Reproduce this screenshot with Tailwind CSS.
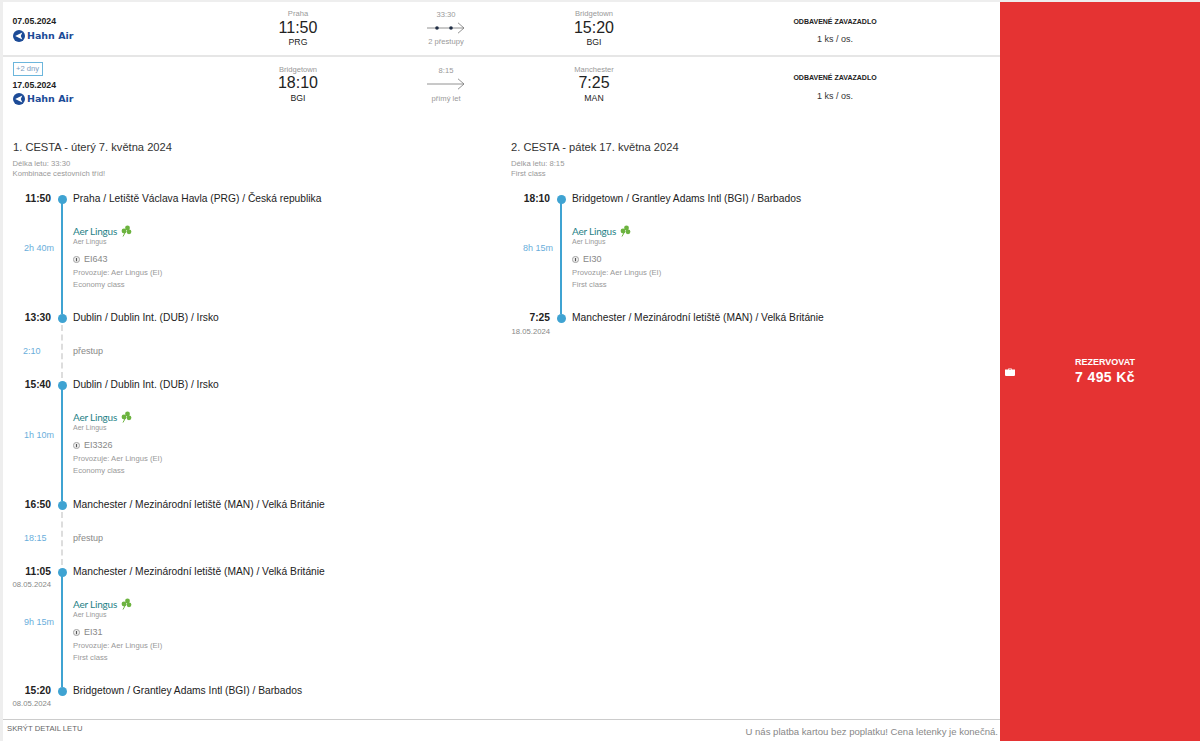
<!DOCTYPE html>
<html lang="en">
<head>
    <meta charset="UTF-8">
    <meta name="viewport" content="width=device-width, initial-scale=1.0">
    <title>Flight detail</title>
    <script src="https://cdn.jsdelivr.net/npm/@tailwindcss/browser@4"></script>
</head>
<body class="font-['Liberation_Sans',Arial,sans-serif]">
    <div class="flex h-[741px] overflow-hidden bg-[#eeeeee] pl-[3px] pt-[2px]">
        <div class="flex w-[997px] flex-col bg-white">

            <!-- summary row 1 -->
            <div class="grid h-[53px] grid-cols-[235px_120px_176px_120px_1fr]">
                <div class="pl-[9.5px] pt-[14px]">
                    <div class="text-[8.7px] leading-[10px] font-bold text-[#222]">07.05.2024</div>
                    <div class="mt-[3px] flex h-[13px] items-center gap-[2.5px]">
                        <svg width="12" height="12" viewBox="0 0 12 12"><circle cx="6" cy="6" r="6" fill="#1c4b97"/><path d="M2.2 6 9.3 2.4 7.8 6 9.3 9.6Z" fill="#fff"/></svg>
                        <span class="font-['DejaVu_Sans',sans-serif] text-[9.5px] leading-none font-bold text-[#1c4b97]">Hahn Air</span>
                    </div>
                </div>
                <div class="flex flex-col items-center pt-[7px]">
                    <div class="text-[7.6px] leading-[9px] text-[#999]">Praha</div>
                    <div class="mt-[1px] text-[16px] leading-[17px] text-[#222]">11:50</div>
                    <div class="mt-[1px] text-[8.7px] leading-[10px] text-[#222]">PRG</div>
                </div>
                <div class="flex flex-col items-center pt-[8px]">
                    <div class="text-[7.6px] leading-[9px] text-[#999]">33:30</div>
                    <svg class="mt-[3px]" width="38" height="12" viewBox="0 0 38 12" fill="none"><path d="M0 6H37M31 .8 37 6 31 11.2" stroke="#777" stroke-width=".8"/><circle cx="10" cy="6" r="1.8" fill="#1f2d44"/><circle cx="24" cy="6" r="1.8" fill="#1f2d44"/></svg>
                    <div class="mt-[3px] text-[7.6px] leading-[9px] text-[#999]">2 přestupy</div>
                </div>
                <div class="flex flex-col items-center pt-[7px]">
                    <div class="text-[7.6px] leading-[9px] text-[#999]">Bridgetown</div>
                    <div class="mt-[1px] text-[16px] leading-[17px] text-[#222]">15:20</div>
                    <div class="mt-[1px] text-[8.7px] leading-[10px] text-[#222]">BGI</div>
                </div>
                <div class="flex flex-col items-center pl-[16px] pt-[15px]">
                    <div class="text-[7px] leading-[9px] font-bold text-[#222]">ODBAVENÉ ZAVAZADLO</div>
                    <div class="mt-[8px] text-[9px] leading-[10px] text-[#333]">1 ks / os.</div>
                </div>
            </div>
            <div class="h-[2px] bg-[#e6e6e6]"></div>

            <!-- summary row 2 -->
            <div class="grid h-[63px] grid-cols-[235px_120px_176px_120px_1fr]">
                <div class="pl-[9.5px] pt-[5px]">
                    <div class="flex h-[14px] w-[30px] items-center justify-center border border-[#6cb6dc] text-[7.6px] text-[#7a9cc0]">+2 dny</div>
                    <div class="mt-[4px] text-[8.7px] leading-[10px] font-bold text-[#222]">17.05.2024</div>
                    <div class="mt-[2px] flex h-[13px] items-center gap-[2.5px]">
                        <svg width="12" height="12" viewBox="0 0 12 12"><circle cx="6" cy="6" r="6" fill="#1c4b97"/><path d="M2.2 6 9.3 2.4 7.8 6 9.3 9.6Z" fill="#fff"/></svg>
                        <span class="font-['DejaVu_Sans',sans-serif] text-[9.5px] leading-none font-bold text-[#1c4b97]">Hahn Air</span>
                    </div>
                </div>
                <div class="flex flex-col items-center pt-[8px]">
                    <div class="text-[7.6px] leading-[9px] text-[#999]">Bridgetown</div>
                    <div class="text-[16px] leading-[17px] text-[#222]">18:10</div>
                    <div class="mt-[2px] text-[8.7px] leading-[10px] text-[#222]">BGI</div>
                </div>
                <div class="flex flex-col items-center pt-[9px]">
                    <div class="text-[7.6px] leading-[9px] text-[#999]">8:15</div>
                    <svg class="mt-[3px]" width="38" height="12" viewBox="0 0 38 12" fill="none"><path d="M0 6H37M31 .8 37 6 31 11.2" stroke="#777" stroke-width=".8"/></svg>
                    <div class="mt-[4px] text-[7.6px] leading-[9px] text-[#999]">přímý let</div>
                </div>
                <div class="flex flex-col items-center pt-[8px]">
                    <div class="text-[7.6px] leading-[9px] text-[#999]">Manchester</div>
                    <div class="text-[16px] leading-[17px] text-[#222]">7:25</div>
                    <div class="mt-[2px] text-[8.7px] leading-[10px] text-[#222]">MAN</div>
                </div>
                <div class="flex flex-col items-center pl-[16px] pt-[16px]">
                    <div class="text-[7px] leading-[9px] font-bold text-[#222]">ODBAVENÉ ZAVAZADLO</div>
                    <div class="mt-[9px] text-[9px] leading-[10px] text-[#333]">1 ks / os.</div>
                </div>
            </div>

            <!-- detail -->
            <div class="flex flex-1 pt-[20px]">
                <!-- leg 1 -->
                <div class="w-[499px]">
                    <div class="pl-[10px]">
                        <div class="text-[11.15px] leading-[14px] text-[#333]">1. CESTA - úterý 7. května 2024</div>
                        <div class="ml-[-0.5px] mt-[5px] text-[7.7px] leading-[10px] text-[#999]">Délka letu: 33:30</div>
                        <div class="ml-[-0.5px] text-[7.7px] leading-[10px] text-[#999]">Kombinace cestovních tříd!</div>
                    </div>

                    <div class="mt-[13px] flex h-[14px] items-center">
                        <div class="w-[48px] text-right text-[10.25px] font-bold text-[#222]">11:50</div>
                        <div class="flex w-[22px] justify-center"><div class="h-[9px] w-[9px] rounded-full bg-[#3fa3d2]"></div></div>
                        <div class="text-[10.25px] text-[#222]">Praha / Letiště Václava Havla (PRG) / Česká republika</div>
                    </div>
                    <div class="flex h-[105px]">
                        <div class="flex w-[48px] items-center pb-[19px] pl-[21px] text-[9px] whitespace-nowrap text-[#6aaedb]">2h 40m</div>
                        <div class="flex w-[22px] justify-center pr-[1px]"><div class="my-[-3px] w-[2px] bg-[#3fa3d2]"></div></div>
                        <div class="pt-[19px]">
                            <div class="flex h-[12px] items-center gap-[3px]">
                                <span class="font-['Lato',sans-serif] text-[10px] tracking-[-0.2px] text-[#1f7f86]">Aer Lingus</span>
                                <svg width="12" height="12" viewBox="0 0 12 12" fill="#6cb33f"><circle cx="4" cy="6" r="2.4"/><circle cx="7.5" cy="3" r="2.4"/><circle cx="9" cy="6.8" r="2.4"/><path d="M6 6 3 11.5" stroke="#6cb33f"/></svg>
                            </div>
                            <div class="text-[7px] leading-[9px] text-[#999]">Aer Lingus</div>
                            <div class="mt-[8px] flex h-[11px] items-center gap-[4px] text-[9px] text-[#888]">
                                <svg width="7" height="7" viewBox="0 0 7 7" fill="none"><circle cx="3.5" cy="3.5" r="3.1" fill="#eee" stroke="#888" stroke-width=".7"/><path d="M3.5 2v3.2" stroke="#555" stroke-width="1.1"/></svg>EI643
                            </div>
                            <div class="mt-[1.5px] text-[7.7px] leading-[11px] text-[#999]">Provozuje: Aer Lingus (EI)</div>
                            <div class="mt-[1px] text-[7.7px] leading-[11px] text-[#999]">Economy class</div>
                        </div>
                    </div>
                    <div class="flex h-[14px] items-center">
                        <div class="w-[48px] text-right text-[10.25px] font-bold text-[#222]">13:30</div>
                        <div class="flex w-[22px] justify-center"><div class="h-[9px] w-[9px] rounded-full bg-[#3fa3d2]"></div></div>
                        <div class="text-[10.25px] text-[#222]">Dublin / Dublin Int. (DUB) / Irsko</div>
                    </div>
                    <div class="flex h-[53px]">
                        <div class="flex w-[48px] items-center pl-[20px] text-[9px] text-[#6aaedb]">2:10</div>
                        <div class="flex w-[22px] justify-center pr-[1px]"><div class="border-l-2 border-dashed border-[#dddddd]"></div></div>
                        <div class="flex items-center text-[9px] text-[#888]">přestup</div>
                    </div>
                    <div class="flex h-[14px] items-center">
                        <div class="w-[48px] text-right text-[10.25px] font-bold text-[#222]">15:40</div>
                        <div class="flex w-[22px] justify-center"><div class="h-[9px] w-[9px] rounded-full bg-[#3fa3d2]"></div></div>
                        <div class="text-[10.25px] text-[#222]">Dublin / Dublin Int. (DUB) / Irsko</div>
                    </div>
                    <div class="flex h-[106px]">
                        <div class="flex w-[48px] items-center pb-[19px] pl-[21px] text-[9px] whitespace-nowrap text-[#6aaedb]">1h 10m</div>
                        <div class="flex w-[22px] justify-center pr-[1px]"><div class="my-[-3px] w-[2px] bg-[#3fa3d2]"></div></div>
                        <div class="pt-[19px]">
                            <div class="flex h-[12px] items-center gap-[3px]">
                                <span class="font-['Lato',sans-serif] text-[10px] tracking-[-0.2px] text-[#1f7f86]">Aer Lingus</span>
                                <svg width="12" height="12" viewBox="0 0 12 12" fill="#6cb33f"><circle cx="4" cy="6" r="2.4"/><circle cx="7.5" cy="3" r="2.4"/><circle cx="9" cy="6.8" r="2.4"/><path d="M6 6 3 11.5" stroke="#6cb33f"/></svg>
                            </div>
                            <div class="text-[7px] leading-[9px] text-[#999]">Aer Lingus</div>
                            <div class="mt-[8px] flex h-[11px] items-center gap-[4px] text-[9px] text-[#888]">
                                <svg width="7" height="7" viewBox="0 0 7 7" fill="none"><circle cx="3.5" cy="3.5" r="3.1" fill="#eee" stroke="#888" stroke-width=".7"/><path d="M3.5 2v3.2" stroke="#555" stroke-width="1.1"/></svg>EI3326
                            </div>
                            <div class="mt-[1.5px] text-[7.7px] leading-[11px] text-[#999]">Provozuje: Aer Lingus (EI)</div>
                            <div class="mt-[1px] text-[7.7px] leading-[11px] text-[#999]">Economy class</div>
                        </div>
                    </div>
                    <div class="flex h-[14px] items-center">
                        <div class="w-[48px] text-right text-[10.25px] font-bold text-[#222]">16:50</div>
                        <div class="flex w-[22px] justify-center"><div class="h-[9px] w-[9px] rounded-full bg-[#3fa3d2]"></div></div>
                        <div class="text-[10.25px] text-[#222]">Manchester / Mezinárodní letiště (MAN) / Velká Británie</div>
                    </div>
                    <div class="flex h-[53px]">
                        <div class="flex w-[48px] items-center pl-[21px] text-[9px] text-[#6aaedb]">18:15</div>
                        <div class="flex w-[22px] justify-center pr-[1px]"><div class="border-l-2 border-dashed border-[#dddddd]"></div></div>
                        <div class="flex items-center text-[9px] text-[#888]">přestup</div>
                    </div>
                    <div class="flex h-[14px] items-center">
                        <div class="w-[48px] text-right text-[10.25px] font-bold text-[#222]">11:05</div>
                        <div class="flex w-[22px] justify-center"><div class="h-[9px] w-[9px] rounded-full bg-[#3fa3d2]"></div></div>
                        <div class="text-[10.25px] text-[#222]">Manchester / Mezinárodní letiště (MAN) / Velká Británie</div>
                    </div>
                    <div class="flex h-[105px]">
                        <div class="flex w-[48px] flex-col">
                            <div class="pt-[1px] text-right text-[7.7px] leading-[10px] whitespace-nowrap text-[#888]">08.05.2024</div>
                            <div class="flex flex-1 items-center pb-[29px] pl-[21px] text-[9px] whitespace-nowrap text-[#6aaedb]">9h 15m</div>
                        </div>
                        <div class="flex w-[22px] justify-center pr-[1px]"><div class="my-[-3px] w-[2px] bg-[#3fa3d2]"></div></div>
                        <div class="pt-[19px]">
                            <div class="flex h-[12px] items-center gap-[3px]">
                                <span class="font-['Lato',sans-serif] text-[10px] tracking-[-0.2px] text-[#1f7f86]">Aer Lingus</span>
                                <svg width="12" height="12" viewBox="0 0 12 12" fill="#6cb33f"><circle cx="4" cy="6" r="2.4"/><circle cx="7.5" cy="3" r="2.4"/><circle cx="9" cy="6.8" r="2.4"/><path d="M6 6 3 11.5" stroke="#6cb33f"/></svg>
                            </div>
                            <div class="text-[7px] leading-[9px] text-[#999]">Aer Lingus</div>
                            <div class="mt-[8px] flex h-[11px] items-center gap-[4px] text-[9px] text-[#888]">
                                <svg width="7" height="7" viewBox="0 0 7 7" fill="none"><circle cx="3.5" cy="3.5" r="3.1" fill="#eee" stroke="#888" stroke-width=".7"/><path d="M3.5 2v3.2" stroke="#555" stroke-width="1.1"/></svg>EI31
                            </div>
                            <div class="mt-[1.5px] text-[7.7px] leading-[11px] text-[#999]">Provozuje: Aer Lingus (EI)</div>
                            <div class="mt-[1px] text-[7.7px] leading-[11px] text-[#999]">First class</div>
                        </div>
                    </div>
                    <div class="flex h-[14px] items-center">
                        <div class="w-[48px] text-right text-[10.25px] font-bold text-[#222]">15:20</div>
                        <div class="flex w-[22px] justify-center"><div class="h-[9px] w-[9px] rounded-full bg-[#3fa3d2]"></div></div>
                        <div class="text-[10.25px] text-[#222]">Bridgetown / Grantley Adams Intl (BGI) / Barbados</div>
                    </div>
                    <div class="mt-[1px] w-[48px] text-right text-[7.7px] leading-[10px] whitespace-nowrap text-[#888]">08.05.2024</div>
                </div>

                <!-- leg 2 -->
                <div class="flex-1">
                    <div class="pl-[9px]">
                        <div class="text-[11.15px] leading-[14px] text-[#333]">2. CESTA - pátek 17. května 2024</div>
                        <div class="mt-[5px] text-[7.7px] leading-[10px] text-[#999]">Délka letu: 8:15</div>
                        <div class="text-[7.7px] leading-[10px] text-[#999]">First class</div>
                    </div>

                    <div class="mt-[13px] flex h-[14px] items-center">
                        <div class="w-[48px] text-right text-[10.25px] font-bold text-[#222]">18:10</div>
                        <div class="flex w-[22px] justify-center"><div class="h-[9px] w-[9px] rounded-full bg-[#3fa3d2]"></div></div>
                        <div class="text-[10.25px] text-[#222]">Bridgetown / Grantley Adams Intl (BGI) / Barbados</div>
                    </div>
                    <div class="flex h-[105px]">
                        <div class="flex w-[48px] items-center pb-[19px] pl-[21px] text-[9px] whitespace-nowrap text-[#6aaedb]">8h 15m</div>
                        <div class="flex w-[22px] justify-center"><div class="my-[-3px] w-[2px] bg-[#3fa3d2]"></div></div>
                        <div class="pt-[19px]">
                            <div class="flex h-[12px] items-center gap-[3px]">
                                <span class="font-['Lato',sans-serif] text-[10px] tracking-[-0.2px] text-[#1f7f86]">Aer Lingus</span>
                                <svg width="12" height="12" viewBox="0 0 12 12" fill="#6cb33f"><circle cx="4" cy="6" r="2.4"/><circle cx="7.5" cy="3" r="2.4"/><circle cx="9" cy="6.8" r="2.4"/><path d="M6 6 3 11.5" stroke="#6cb33f"/></svg>
                            </div>
                            <div class="text-[7px] leading-[9px] text-[#999]">Aer Lingus</div>
                            <div class="mt-[8px] flex h-[11px] items-center gap-[4px] text-[9px] text-[#888]">
                                <svg width="7" height="7" viewBox="0 0 7 7" fill="none"><circle cx="3.5" cy="3.5" r="3.1" fill="#eee" stroke="#888" stroke-width=".7"/><path d="M3.5 2v3.2" stroke="#555" stroke-width="1.1"/></svg>EI30
                            </div>
                            <div class="mt-[1.5px] text-[7.7px] leading-[11px] text-[#999]">Provozuje: Aer Lingus (EI)</div>
                            <div class="mt-[1px] text-[7.7px] leading-[11px] text-[#999]">First class</div>
                        </div>
                    </div>
                    <div class="flex h-[14px] items-center">
                        <div class="w-[48px] text-right text-[10.25px] font-bold text-[#222]">7:25</div>
                        <div class="flex w-[22px] justify-center"><div class="h-[9px] w-[9px] rounded-full bg-[#3fa3d2]"></div></div>
                        <div class="text-[10.25px] text-[#222]">Manchester / Mezinárodní letiště (MAN) / Velká Británie</div>
                    </div>
                    <div class="mt-[2px] w-[48px] text-right text-[7.7px] leading-[10px] whitespace-nowrap text-[#888]">18.05.2024</div>
                </div>
            </div>

            <!-- footer -->
            <div class="flex h-[22px] items-start justify-between border-t border-[#cccccc] pl-[4px] pr-[2px]">
                <div class="pt-[4px] text-[7.7px] leading-[10px] text-[#666]">SKRÝT DETAIL LETU</div>
                <div class="pt-[6px] text-[9.57px] leading-[11px] text-[#888]">U nás platba kartou bez poplatku! Cena letenky je konečná.</div>
            </div>
        </div>

        <!-- reserve button -->
        <div class="flex flex-1 items-center bg-[#e53333] pl-[5px] text-white">
            <svg width="10" height="8" viewBox="0 0 10 8" fill="#fff"><path d="M3.2 1.5V.5h3.6v1H10v5.5a1 1 0 0 1-1 1H1a1 1 0 0 1-1-1V1.5Zm.7 0h2.2V1H3.9Z"/></svg>
            <div class="flex flex-1 flex-col items-center pb-[2px] pr-[5px]">
                <div class="text-[9px] leading-[11px] font-bold">REZERVOVAT</div>
                <div class="mt-[1px] text-[14px] leading-[16px] font-bold tracking-[0.4px]">7 495 Kč</div>
            </div>
        </div>
    </div>
</body>
</html>
